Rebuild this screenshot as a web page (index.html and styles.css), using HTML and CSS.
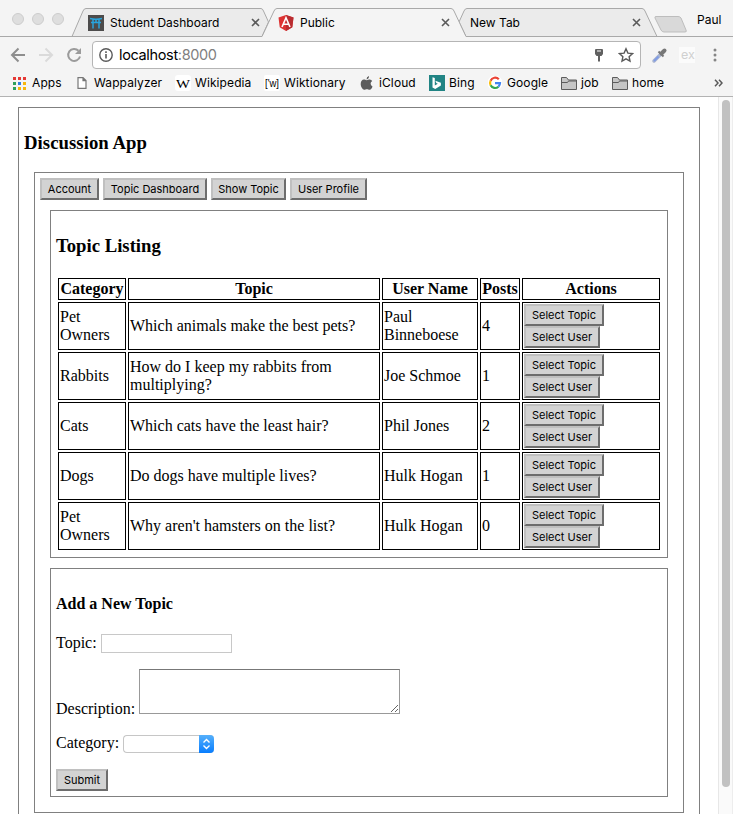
FILE: index.html
```html
<!DOCTYPE html>
<html lang="en">
<head>
<meta charset="utf-8">
<title>Public</title>
<link rel="stylesheet" href="styles.css">
</head>
<body>
<header class="chrome">
  <div class="tabstrip">
    <svg class="tab-shapes" width="733" height="37" viewBox="0 0 733 37">
      <g fill="#dedede" stroke="#cdcdcd"><circle cx="18" cy="19" r="5.5"/><circle cx="38" cy="19" r="5.5"/><circle cx="58" cy="19" r="5.5"/></g>
      <g stroke="#a9a9a9">
        <path fill="#ebebeb" d="M72 36.5 83 11Q84 8.500 86 8.500H261Q262.500 8.500 263.500 11L268.500 22 262 36.500Z"/>
        <path fill="#ebebeb" d="M466 36.500 459 22 464 11Q465 8.500 467 8.500H642Q644 8.500 645 11L657 36.500Z"/>
        <path fill="none" d="M0 36.500H262M466 36.500H733"/>
        <path fill="#f4f4f4" stroke="none" d="M262 37 274 11Q275 8.500 277 8.500H451Q453 8.500 454 11L466 37"/>
        <path fill="none" d="M262 36.500 274 11Q275 8.500 277 8.500H451Q453 8.500 454 11L466 36.500"/>
        <path fill="#d9d9d9" stroke="#bdbdbd" d="M656 16.500H678Q680 16.500 681 18L686 30Q687 32 685 32H664Q662 32 661 30L655 18Q654.500 16.500 656 16.500Z"/>
      </g>
    </svg>
    <div class="tab tab-first">
      <svg class="favicon" width="16" height="16" viewBox="0 0 16 16"><path fill="#4c4b4b" d="M0 0h16v16H0z"/><path d="M2 3.500Q8 5 14 3.500M3 7.500h10M5 4v9.500M11 4v9.500M8 4v3" fill="none" stroke="#28a3dc" stroke-width="1.500"/></svg>
      <span class="tab-title">Student Dashboard</span>
      <svg class="close" width="9" height="9" viewBox="0 0 9 9"><path d="m1 1 7 7M8 1 1 8"/></svg>
    </div>
    <div class="tab tab-active">
      <svg class="favicon" width="16" height="16" viewBox="0 0 16 16"><path fill="#dd3333" d="M8 0 15.500 2.600 14.300 12.300 8 16 1.700 12.300.5 2.600Z"/><path fill="#b92d31" d="M8 0 15.500 2.600 14.300 12.300 8 16Z"/><path d="M4 12 8 2.800 12 12M5.600 9.300h4.800" fill="none" stroke="#fff" stroke-width="1.600"/></svg>
      <span class="tab-title">Public</span>
      <svg class="close" width="9" height="9" viewBox="0 0 9 9"><path d="m1 1 7 7M8 1 1 8"/></svg>
    </div>
    <div class="tab tab-last">
      <span class="tab-title">New Tab</span>
      <svg class="close" width="9" height="9" viewBox="0 0 9 9"><path d="m1 1 7 7M8 1 1 8"/></svg>
    </div>
    <span class="profile">Paul</span>
  </div>

  <div class="toolbar">
    <svg class="nav" width="84" height="28" viewBox="0 0 84 28" fill="none" stroke-width="2">
      <path stroke="#8e8e8e" d="M25 14H12M18.500 7.500 12 14l6.500 6.500"/>
      <path stroke="#dadada" d="M39 14h13M45.500 7.500 52 14l-6.500 6.500"/>
      <path stroke="#9b9b9b" d="M78.500 9.700A6 6 0 1 0 80 15.500"/><path fill="#9b9b9b" d="M81 7v6h-6Z"/>
    </svg>
    <div class="omnibox">
      <svg width="14" height="14" viewBox="0 0 14 14"><circle cx="7" cy="7" r="6.200" fill="none" stroke="#5a5a5a" stroke-width="1.400"/><path fill="#5a5a5a" d="M6.200 6h1.600v4.500H6.200zM6.200 3.300h1.600v1.600H6.200z"/></svg>
      <span class="url">localhost<span class="port">:8000</span></span>
      <svg class="key" width="8" height="13" viewBox="0 0 8 13"><path fill="#606060" d="M1 0h6q1 0 1 1v4L6.500 7H5v5.500H3V7H1.500L0 5V1q0-1 1-1Z"/><path fill="#fff" d="M2 1.500h4v1H2z"/></svg>
      <svg width="16" height="16" viewBox="0 0 16 16"><path fill="none" stroke="#5a5a5a" stroke-width="1.400" d="m8 1.800 1.900 4.300 4.600.5-3.400 3.100.9 4.500-4-2.300-4 2.300.9-4.500L1.500 6.600l4.600-.5Z"/></svg>
    </div>
    <svg class="ext" width="84" height="28" viewBox="0 0 84 28">
      <path d="m13 20 7-7" stroke="#a9b4d0" stroke-width="3.500" stroke-linecap="round"/><path d="m13 20 4.500-4.500" stroke="#7f9ce6" stroke-width="1.800"/><path d="m17.500 10.500 5 5" stroke="#777" stroke-width="2"/><path d="m20.500 12.500 3-3" stroke="#777" stroke-width="4" stroke-linecap="round"/>
      <path fill="#fbfbfb" d="M38 6h16v16H38z"/><text class="ex" x="40" y="18">ex</text>
      <g fill="#858585"><circle cx="74" cy="9" r="1.500"/><circle cx="74" cy="14" r="1.500"/><circle cx="74" cy="19" r="1.500"/></g>
    </svg>
  </div>

  <nav class="bookmarks">
    <a class="i20"><svg width="14" height="14" viewBox="0 0 14 14"><path fill="#e53935" d="M1 1h3v3H1zM6 1h3v3H6zM11 1h3v3h-3z"/><path fill="#2e9f5b" d="M1 6h3v3H1zM1 11h3v3H1z"/><path fill="#2f7de1" d="M6 6h3v3H6z"/><path fill="#f6b60b" d="M11 6h3v3h-3zM6 11h3v3H6zM11 11h3v3h-3z"/></svg><span>Apps</span></a>
    <a class="i17"><svg width="10" height="12" viewBox="0 0 10 12"><path fill="#fff" stroke="#777" stroke-width="1.200" d="M1 .6h5L9 3.600v7.800H1ZM6 .6v3h3"/></svg><span>Wappalyzer</span></a>
    <a class="i20"><svg width="16" height="16" viewBox="0 0 16 16"><rect width="16" height="16" rx="3" fill="#fff"/><text class="wiki-w" x="1" y="12.500" textLength="14" lengthAdjust="spacingAndGlyphs">W</text></svg><span>Wikipedia</span></a>
    <a class="i20"><svg width="16" height="16" viewBox="0 0 16 16"><rect width="16" height="16" rx="2" fill="#fff"/><text class="wikt" x="1" y="11.500" textLength="14" lengthAdjust="spacingAndGlyphs">['w]</text></svg><span>Wiktionary</span></a>
    <a class="i19"><svg width="13" height="14" viewBox="0 0 13 14"><path fill="#5c5c5c" d="M9 0Q9.200 2.800 6.500 3.400 6.400 1 9 0ZM6.700 4.200C8 4.200 8.700 3.500 9.800 3.600q1.600.1 2.400 1.300-1.700 1-1.600 2.800.1 1.900 1.900 2.700c-.5 1.500-1.600 3.300-2.800 3.400-1 .1-1.600-.6-2.800-.6s-1.700.6-2.700.6C2.500 13.600.7 10.500.7 8c0-2.800 1.500-4.300 3.200-4.400 1.200 0 1.800.6 2.800.6Z"/></svg><span>iCloud</span></a>
    <a class="i20"><svg width="16" height="16" viewBox="0 0 16 16"><path fill="#218484" d="M0 0h16v16H0z"/><path fill="#fff" d="m3.500 2.300 2.300.8v7.300l3-1.700-1.500-.8-1-2.200 5.600 2v2.700L6.200 14l-2.700-1.500Z"/></svg><span>Bing</span></a>
    <a class="i19"><svg width="14" height="14" viewBox="0 0 14 14"><circle cx="7" cy="7" r="7.500" fill="#fff"/><g fill="none" stroke-width="2.200"><path stroke="#ea4335" d="M10.800 3.200A5 5 0 0 0 2.600 4.700"/><path stroke="#fbbc05" d="M2.600 4.700a5 5 0 0 0 0 4.600"/><path stroke="#34a853" d="M2.600 9.300a5 5 0 0 0 7.800 1.400"/><path stroke="#4285f4" d="M10.400 10.700A5 5 0 0 0 12 7.100H7"/></g></svg><span>Google</span></a>
    <a class="i20"><svg width="17" height="13" viewBox="0 0 17 13"><path fill="#c6c6c6" stroke="#5c5c5c" d="M.5 12.500V.5h5L7.500 3h8v9.500ZM.5 5.500h6l1-1.500h8"/></svg><span>job</span></a>
    <a class="i20"><svg width="17" height="13" viewBox="0 0 17 13"><path fill="#c6c6c6" stroke="#5c5c5c" d="M.5 12.500V.5h5L7.500 3h8v9.500ZM.5 5.500h6l1-1.500h8"/></svg><span>home</span></a>
    <svg class="more" width="9" height="8" viewBox="0 0 9 8"><path fill="none" stroke="#5a5a5a" stroke-width="1.500" d="m1 .8 3 3.200-3 3.200M5 .8 8 4 5 7.200"/></svg>
  </nav>
</header>

<div class="viewport">
  <main class="box outer">
    <h3 class="app-title">Discussion App</h3>
    <div class="box inner">
      <div class="menu"><button class="w59">Account</button><button class="w104">Topic Dashboard</button><button class="w75">Show Topic</button><button class="w77">User Profile</button></div>
      <section class="box listing">
        <h3>Topic Listing</h3>
        <table>
          <colgroup><col class="c1"><col class="c2"><col class="c3"><col class="c4"><col class="c5"></colgroup>
          <tr><th>Category</th><th>Topic</th><th>User Name</th><th>Posts</th><th>Actions</th></tr>
          <tr><td>Pet Owners</td><td>Which animals make the best pets?</td><td>Paul Binneboese</td><td>4</td><td><button class="w80">Select Topic</button><button class="w76">Select User</button></td></tr>
          <tr><td>Rabbits</td><td>How do I keep my rabbits from multiplying?</td><td>Joe Schmoe</td><td>1</td><td><button class="w80">Select Topic</button><button class="w76">Select User</button></td></tr>
          <tr><td>Cats</td><td>Which cats have the least hair?</td><td>Phil Jones</td><td>2</td><td><button class="w80">Select Topic</button><button class="w76">Select User</button></td></tr>
          <tr><td>Dogs</td><td>Do dogs have multiple lives?</td><td>Hulk Hogan</td><td>1</td><td><button class="w80">Select Topic</button><button class="w76">Select User</button></td></tr>
          <tr><td>Pet Owners</td><td>Why aren't hamsters on the list?</td><td>Hulk Hogan</td><td>0</td><td><button class="w80">Select Topic</button><button class="w76">Select User</button></td></tr>
        </table>
      </section>
      <form class="box new-topic">
        <h4>Add a New Topic</h4>
        <label class="field field-topic">Topic: <input type="text"></label>
        <label class="field field-desc">Description: <textarea></textarea></label>
        <div class="field field-cat">Category: <span class="select"><svg width="15" height="18" viewBox="0 0 15 18"><defs><linearGradient id="blue" x2="0" y2="1"><stop stop-color="#55b0fb"/><stop offset="1" stop-color="#087dfe"/></linearGradient></defs><path fill="url(#blue)" d="M0 0h11q4 0 4 4v10q0 4-4 4H0Z"/><path fill="none" stroke="#fff" stroke-width="1.400" d="m4.500 7.500 3-3 3 3M4.500 10.500l3 3 3-3"/></svg></span></div>
        <button class="w52" type="button">Submit</button>
      </form>
    </div>
  </main>
  <div class="scrollbar"><div class="thumb"></div></div>
</div>
</body>
</html>
```

FILE: styles.css
```css
* { box-sizing: border-box; }
body { margin: 0; width: 733px; height: 814px; overflow: hidden; background: #fff; color: #000; font: 16px/18px "Liberation Serif", serif; }
svg { display: block; flex: none; }

/* Browser chrome */
.chrome { height: 97px; background: #f4f4f4; border-bottom: 1px solid #b3b3b3; font: 12px/16px Inter, sans-serif; }
.tabstrip { position: relative; display: flex; height: 37px; }
.tab-shapes { position: absolute; left: 0; top: 0; }
.tab { position: relative; display: flex; align-items: center; height: 29px; margin-top: 8px; }
.tab-first { margin-left: 88px; width: 172px; }
.tab-active { margin-left: 18px; width: 172px; }
.tab-last { margin-left: 20px; width: 171px; }
.favicon { margin-right: 6px; }
.close { margin-left: auto; fill: none; stroke: #5a5a5a; stroke-width: 1.6; }
.profile { position: relative; margin: 12px 0 0 56px; }
.toolbar { display: flex; align-items: center; height: 32px; margin-top: 2px; }
.nav { margin-right: 8px; }
.omnibox { display: flex; align-items: center; width: 549px; height: 28px; padding: 0 6px; background: #fff; border: 1px solid #b5b5b5; border-radius: 4px; }
.url { margin-left: 6px; font-size: 14.5px; letter-spacing: -.35px; }
.port { color: #808080; }
.key { margin: 0 15px 0 auto; }
.ex { font: 12.5px Inter, sans-serif; fill: #d0d0d0; }
.bookmarks { display: grid; grid-template-columns: 65px 98px 89px 96px 69px 59px 73px 51px 102px 9px; align-items: center; height: 24px; margin-left: 12px; letter-spacing: .1px; }
.bookmarks a { display: flex; align-items: center; white-space: nowrap; }
.i20 svg { margin-right: 4px; }
.i20:first-child svg { margin-right: 6px; }
.i20 svg[width="17"] { margin-right: 3px; }
.i17 svg { margin-right: 7px; }
.i19 svg { margin-right: 5px; }
.i19:nth-child(5) svg { margin-right: 6px; }
.wiki-w { font: 13.5px "Liberation Serif", serif; letter-spacing: 0; }
.wikt { font: 10px "Liberation Sans", sans-serif; letter-spacing: 0; }

/* Page */
.viewport { display: flex; justify-content: space-between; height: 717px; overflow: hidden; }
.box { border: 1px solid #808080; padding: 5px; }
.outer { width: 682px; height: 740px; margin: 10px 0 0 18px; }
.inner { margin: 0 10px; height: 641px; }
h3 { margin: 19px 0; font-size: 18.72px; line-height: 22px; }
.app-title { margin-bottom: 18px; letter-spacing: .06px; }
.menu { display: flex; gap: 4px; }
button { display: block; height: 22px; padding: 0; font: 11px/16px Inter, sans-serif; color: #000; background: #d3d3d3; border: 2px solid; border-color: #c0c0c0 #6d6d6d #6d6d6d #c0c0c0; border-radius: 0; white-space: nowrap; }
.w52 { width: 52px; }
.w59 { width: 59px; }
.w75 { width: 75px; }
.w76 { width: 76px; }
.w77 { width: 77px; }
.w80 { width: 80px; }
.w104 { width: 104px; }
.listing { margin: 10px 10px 0; height: 348px; }
table { width: 606px; table-layout: fixed; border-spacing: 2px; }
.c1 { width: 68px; }
.c2 { width: 252px; }
.c3 { width: 96px; }
.c4 { width: 40px; }
.c5 { width: 138px; }
th, td { border: 1px solid #000; padding: 1px; }
th { height: 22px; }
td { height: 48px; }
.new-topic { margin: 10px 10px 0; height: 229px; }
h4 { margin: 21px 0; font-size: 16px; line-height: 18px; }
.field { display: flex; }
.field input { width: 131px; height: 19px; margin: 0 0 0 4px; padding: 0; border: 1px solid #c8c8c8; }
.field-desc { margin-top: 16px; align-items: flex-end; line-height: 10px; }
.field-desc textarea { width: 261px; height: 45px; margin: 0 0 0 4px; border: 1px solid #999; border-top-color: #777; }
.field-cat { margin: 21px 0 16px; line-height: 16px; }
.select { display: flex; justify-content: flex-end; width: 91px; height: 18px; margin-left: 4px; border: solid #c6c6c6; border-width: 1px 0 1px 1px; border-radius: 4px; }
.select svg { margin: -1px 0; }
.scrollbar { width: 15px; height: 717px; padding: 3px 0 0 3px; background: #fafafa; border-left: 1px solid #e7e7e7; border-right: 1px solid #ededed; }
.thumb { width: 8px; height: 687px; background: #c1c1c1; border-radius: 4px; }
```
